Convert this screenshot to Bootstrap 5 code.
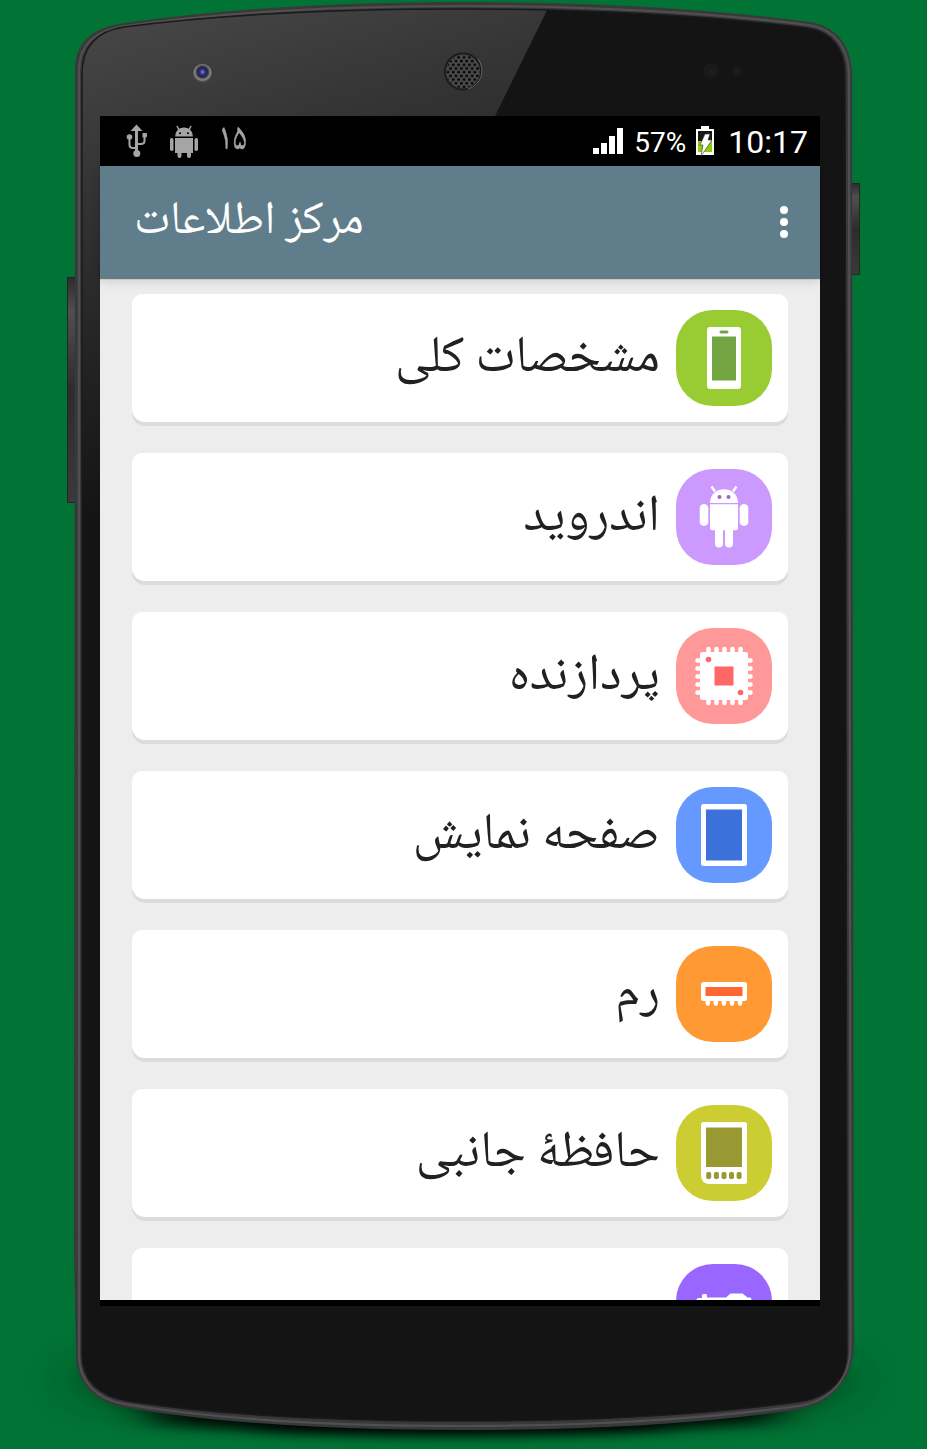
<!DOCTYPE html>
<html lang="fa">
<head>
<meta charset="utf-8">
<meta name="viewport" content="width=device-width, initial-scale=1">
<title>مرکز اطلاعات</title>
<link href="https://cdn.jsdelivr.net/npm/bootstrap@5.3.0/dist/css/bootstrap.min.css" rel="stylesheet">
<style>
body{background:#007335;width:927px;height:1449px;overflow:hidden;font-family:"Noto Naskh Arabic","Noto Sans Arabic","Noto Sans","DejaVu Sans",sans-serif}
.device{width:927px;height:1449px;padding:116px 107px 0 100px}
.device-art{position:absolute;left:0;top:0;z-index:0}
.screen{position:relative;z-index:1;width:720px;height:1190px;background:#000}
.status{height:50px;font-family:Roboto,sans-serif;color:#fff}
.status svg,.row-icon svg{display:block}
.notice{font:38px/1 "Noto Naskh Arabic","Noto Sans Arabic","DejaVu Sans",sans-serif;color:#a5a5a5;-webkit-text-stroke:.4px #a5a5a5;transform:scaleX(.85);transform-origin:left center;margin:0 0 1px -2px}
.status-end{padding-right:12px}
.battery-text{font-size:28px;margin:3px 9px 0 11px}
.clock{font-size:32px;margin:2px 0 0 13px}
.appbar{height:112px;background:#607d8b;position:relative;z-index:2;box-shadow:0 1px 1px rgba(0,0,0,.45),0 3px 10px rgba(0,0,0,.15)}
.app-title{color:#fff;font-size:46.5px;line-height:1;white-space:nowrap;margin-left:34px;padding-top:2px}
.feed{height:1022px;background:#ededed;overflow:hidden;padding:16px 32px 0}
.entry{height:128px;margin-bottom:31px;border:0;border-radius:10px 10px 13px 13px;background:#fff;box-shadow:0 4px 0 #dcdcdc;padding:16px;flex-shrink:0}
.row-icon{width:96px;height:96px;border-radius:37px;flex:none;overflow:hidden}
.entry-label{color:#212121;font-size:51.4px;line-height:1;white-space:nowrap;margin-right:16px;padding-top:5px}
.c1{background:#9c3}.c2{background:#c9f}.c3{background:#f99}.c4{background:#69f}.c5{background:#f93}.c6{background:#cc3}.c7{background:#96f}
</style>
</head>
<body>
<div class="device position-relative">
<svg class="device-art" width="927" height="1449" viewBox="0 0 927 1449">
<defs>
<linearGradient id="gloss" x1="120" y1="20" x2="260" y2="480" gradientUnits="userSpaceOnUse"><stop offset="0" stop-color="#464646"/><stop offset=".28" stop-color="#363636"/><stop offset=".7" stop-color="#212121"/><stop offset="1" stop-color="#131313"/></linearGradient>
<linearGradient id="key" x1="0" x2="0" y1="0" y2="1"><stop offset="0" stop-color="#2c2c2c"/><stop offset=".15" stop-color="#505050"/><stop offset=".5" stop-color="#2c2c2c"/><stop offset="1" stop-color="#3a3a3a"/></linearGradient>
<radialGradient id="lens" cx=".5" cy=".42"><stop offset="0" stop-color="#8a8ad0"/><stop offset=".25" stop-color="#3434a0"/><stop offset=".5" stop-color="#222238"/><stop offset=".68" stop-color="#555"/><stop offset=".85" stop-color="#8a8a8a"/><stop offset="1" stop-color="#4a4a4a"/></radialGradient>
<filter id="soft" x="-20%" y="-100%" width="140%" height="300%"><feGaussianBlur stdDeviation="24 6"/></filter>
<filter id="wide" x="-20%" y="-50%" width="140%" height="200%"><feGaussianBlur stdDeviation="22 18"/></filter>
<clipPath id="face"><path d="M82 74C82 45 98 31 124 27C230 13 345 9 463 9C584 9 705 15 807 28C831 31 845 49 845 74L847 1352C847 1381 828 1396 804 1401C700 1416 590 1421 463 1421C340 1421 222 1416 127 1401C98 1396 82 1379 82 1355Z"/></clipPath>
<pattern id="mesh" x="1" width="5.400" height="7.400" patternUnits="userSpaceOnUse"><circle cx="1.350" cy="1.850" r="1.500" fill="#050505"/><circle cx="4.050" cy="5.550" r="1.500" fill="#050505"/></pattern>
</defs>
<ellipse cx="463" cy="1380" rx="400" ry="36" fill="#00220e" opacity=".5" filter="url(#wide)"/>
<path d="M130 1392H796L770 1424Q463 1440 160 1426Z" fill="#000" opacity=".85" filter="url(#soft)"/>
<path d="M220 1400H706L660 1430Q463 1439 260 1430Z" fill="#000" opacity=".8" filter="url(#soft)"/>
<rect x="67.500" y="277.500" width="10" height="225" fill="url(#key)" stroke="#252525"/>
<rect x="850" y="183.500" width="9.500" height="91" fill="url(#key)" stroke="#252525"/>
<path d="M75 68C76 40 95 27 125 23C230 8 345 2 463 2C584 2 705 8 810 22C838 27 851 47 852 72L854 1345C853 1378 833 1404 796 1410C690 1425 580 1430 463 1430C340 1430 220 1424 122 1407C92 1401 76 1380 76 1356L74 1250Z" fill="#39393b"/>
<path d="M79 70C79 43 97 30 125 26C230 11 345 6 463 6C584 6 705 12 809 25C835 29 848 48 849 72L850.500 1348C850 1378 831 1401 799 1406C690 1421 580 1426 463 1426C340 1426 220 1420 124 1404C95 1399 79 1380 79 1356Z" fill="none" stroke="#505052" stroke-width="2.200"/>
<g clip-path="url(#face)">
<rect x="70" width="790" height="1449" fill="#141414"/>
<path d="M70 0H552L495 116L300 510H70Z" fill="url(#gloss)"/>
</g>
<path d="M82 74C82 45 98 31 124 27C230 13 345 9 463 9C584 9 705 15 807 28C831 31 845 49 845 74L847 1352C847 1381 828 1396 804 1401C700 1416 590 1421 463 1421C340 1421 222 1416 127 1401C98 1396 82 1379 82 1355Z" fill="none" stroke="#1a1a1a" stroke-width="1.500"/>
<circle cx="202.500" cy="73.500" r="9.500" fill="url(#lens)"/>
<circle cx="463" cy="71.500" r="19" fill="#1b1b1b"/><circle cx="463" cy="71.500" r="17" fill="#4a4a4a"/><circle cx="463" cy="71.500" r="16.500" fill="url(#mesh)"/><path d="M478 59a19 19 0 0 1-10 30" fill="none" stroke="#666"/>
<circle cx="711" cy="71" r="8" fill="#1b1a1a"/><circle cx="737" cy="71" r="5" fill="#1c1a1a"/><circle cx="712" cy="72" r="1.500" fill="#321c1c"/><circle cx="737" cy="71" r="1.200" fill="#321c1c"/>
</svg>
<main class="screen">
<div class="status d-flex align-items-center justify-content-between">
<div class="d-flex align-items-center h-100">
<svg width="120" height="50" viewBox="0 0 120 50"><g fill="none" stroke="#a5a5a5" stroke-width="2"><path d="M36.500 14V37" stroke-width="3"/><path d="M29.500 22V29Q29.500 32 33 32H36M44.500 20V25Q44.500 28 41 28H37"/></g><g fill="#a5a5a5"><path d="M30.500 15L36.500 8.500L42.500 15Z"/><circle cx="29.500" cy="21" r="2.800"/><path d="M42.500 17h4l.7 2-.7 2.500h-4z"/><circle cx="36.800" cy="37.500" r="3.500"/><path d="M75.200 20.500C75.200 8.500 92.800 8.500 92.800 20.500Z"/><rect x="75" y="22" width="18" height="15"/><rect x="70" y="22" width="3.500" height="13" rx="1.700"/><rect x="94.500" y="22" width="3.500" height="13" rx="1.700"/><rect x="77.500" y="35" width="4" height="7" rx="2"/><rect x="87" y="35" width="4" height="7" rx="2"/></g><path d="M79 14L77 10M89 14L91 10" stroke="#a5a5a5" stroke-width="1.600"/><circle cx="80" cy="17.200" r="1" fill="#000"/><circle cx="88" cy="17.200" r="1" fill="#000"/></svg>
<span class="notice">۱۵</span>
</div>
<div class="status-end d-flex align-items-center h-100">
<svg width="30" height="28" viewBox="0 0 30 28" fill="#fff"><path d="M0 21h6v6H0zM8 16h6v11H8zM16 9h6v18h-6zM24 1h6v26h-6z"/></svg>
<span class="battery-text">57%</span>
<svg width="20" height="34" viewBox="0 0 20 34"><path d="M6 2h8v3h5v26H1V5h5z" fill="#fff"/><path d="M3 7h14v21H3z" fill="#161616"/><path d="M3 17h14v11H3z" fill="#8ccb0a"/><path d="M10 10h5l-2 6h4L6 32l2-11H5z" fill="#fff" stroke="#333" stroke-width=".6"/></svg>
<span class="clock">10:17</span>
</div>
</div>
<header class="appbar d-flex align-items-center justify-content-between">
<div class="app-title" dir="rtl">مرکز اطلاعات</div>
<svg width="12" height="32" viewBox="0 0 12 32" fill="#fff" style="margin-right:30px"><circle cx="6" cy="4" r="4"/><circle cx="6" cy="16" r="4"/><circle cx="6" cy="28" r="4"/></svg>
</header>
<section class="feed d-flex flex-column" dir="rtl">
<article class="card entry flex-row align-items-center"><div class="row-icon c1"><svg width="96" height="96"><rect x="31" y="17" width="34" height="62" rx="3" fill="#fff"/><path d="M36 26.500h24v44H36z" fill="#73a642"/><rect x="43.500" y="20.500" width="9" height="3" rx="1.500" fill="#73a642"/></svg></div><div class="entry-label">مشخصات کلی</div></article>
<article class="card entry flex-row align-items-center"><div class="row-icon c2"><svg width="96" height="96" fill="#fff"><path d="M34 34C34 15.500 62 15.500 62 34Z"/><path d="M39 22.500L35.500 17.500M57 22.500L60.500 17.500" stroke="#fff" stroke-width="2.400"/><path d="M34 35.200h28v24q0 2-2 2H36q-2 0-2-2z"/><rect x="23.700" y="35" width="8.600" height="22" rx="4.300"/><rect x="63.700" y="35" width="8.600" height="22" rx="4.300"/><rect x="39" y="57" width="8" height="21.500" rx="4"/><rect x="49" y="57" width="8" height="21.500" rx="4"/><g fill="#96c"><circle cx="43.500" cy="28" r="2"/><circle cx="52.500" cy="28" r="2"/></g></svg></div><div class="entry-label">اندروید</div></article>
<article class="card entry flex-row align-items-center"><div class="row-icon c3"><svg width="96" height="96"><rect x="24" y="24" width="48" height="48" rx="2.500" fill="#fff"/><path d="M32.500 21V75M40.500 21V75M48.500 21V75M56.500 21V75M64.500 21V75M21.500 32.500H74.500M21.500 40.500H74.500M21.500 48.500H74.500M21.500 56.500H74.500M21.500 64.500H74.500" stroke="#fff" stroke-width="4.500" stroke-linecap="round"/><path d="M38.500 38.500h19v19h-19z" fill="#f66"/><circle cx="32.500" cy="31.500" r="2.800" fill="#f66"/><circle cx="64.500" cy="64.500" r="2.800" fill="#f66"/></svg></div><div class="entry-label">پردازنده</div></article>
<article class="card entry flex-row align-items-center"><div class="row-icon c4"><svg width="96" height="96"><rect x="25" y="17" width="46" height="62" rx="2.500" fill="#fff"/><path d="M30 22.500h36v51H30z" fill="#3d71da"/></svg></div><div class="entry-label">صفحه نمایش</div></article>
<article class="card entry flex-row align-items-center"><div class="row-icon c5"><svg width="96" height="96"><rect x="25" y="36" width="46" height="19" rx="2.500" fill="#fff"/><path d="M31.800 53v4.500M39.800 53v4.500M47.900 53v4.500M56 53v4.500M64 53v4.500" stroke="#fff" stroke-width="4.500" stroke-linecap="round"/><path d="M29.500 41h37v9h-37z" fill="#f63"/></svg></div><div class="entry-label">رم</div></article>
<article class="card entry flex-row align-items-center"><div class="row-icon c6"><svg width="96" height="96"><path d="M27.500 17h41q2.500 0 2.500 2.500v57q0 2.500-2.500 2.500H34q-9 0-9-9V19.500q0-2.500 2.500-2.500z" fill="#fff"/><path d="M30 22.500h36V62H30z" fill="#993"/><g fill="#993"><rect x="30.200" y="67" width="5" height="7" rx="1.800"/><rect x="37.900" y="67" width="5" height="7" rx="1.800"/><rect x="45.500" y="67" width="5" height="7" rx="1.800"/><rect x="53" y="67" width="5" height="7" rx="1.800"/><rect x="60.600" y="67" width="5" height="7" rx="1.800"/></g></svg></div><div class="entry-label">حافظهٔ جانبی</div></article>
<article class="card entry flex-row align-items-center"><div class="row-icon c7"><svg width="96" height="96" fill="#fff"><path d="M20 78V36l2-2h4V31l1-1h3l1 1v2.500h19l4.500-4h12l5 4h3l1 2V78z"/></svg></div></article>
</section>
</main>
</div>
<script src="https://cdn.jsdelivr.net/npm/bootstrap@5.3.0/dist/js/bootstrap.bundle.min.js"></script>
</body>
</html>
